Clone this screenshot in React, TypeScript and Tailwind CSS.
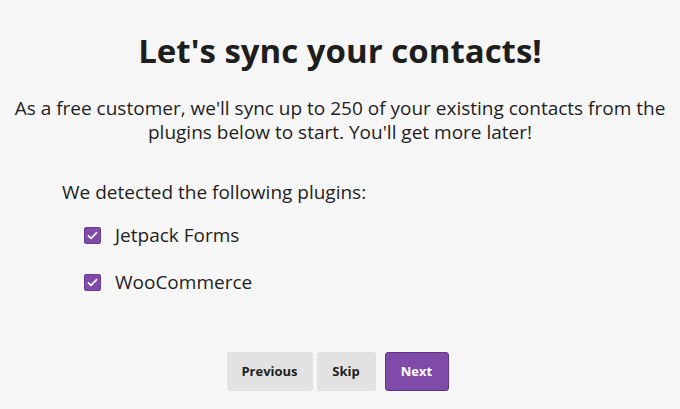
export default function App() {
  const plugins = ["Jetpack Forms", "WooCommerce"];

  return (
    <div
      className="min-h-[409px] w-full bg-[#f6f6f6] text-[#1e1e1e] pt-[29px]"
      style={{ fontFamily: "'Open Sans', 'Noto Sans', sans-serif" }}
    >
      <h1 className="text-center text-[33px] font-bold leading-[44px]">
        Let's sync your contacts!
      </h1>
      <p className="mt-[23px] px-3 text-center text-[19px] leading-[24px]">
        As a free customer, we'll sync up to 250 of your existing contacts from the plugins below to start. You'll get more later!
      </p>

      <div className="mt-[36px] pl-[62px]">
        <div className="text-[19px] leading-[24px]">We detected the following plugins:</div>
        <div className="mt-[23px] flex flex-col gap-[30px] pl-[22px]">
          {plugins.map((name) => (
            <label key={name} className="flex items-center gap-[14px] text-[19px] leading-[17px]">
              <span className="flex h-[17px] w-[17px] items-center justify-center rounded-[2px] border border-[#6b3d96] bg-[#7f4aa8]">
                <svg viewBox="0 0 16 16" className="h-[13px] w-[13px]" fill="none">
                  <path d="M3 8.5l3.2 3L13 4.5" stroke="white" strokeWidth="2" strokeLinecap="round" strokeLinejoin="round" />
                </svg>
              </span>
              {name}
            </label>
          ))}
        </div>
      </div>

      <div className="mt-[61px] flex justify-center pr-[5px]">
        <button className="h-[39px] w-[86px] rounded-[3px] bg-[#e2e2e2] text-[13px] font-bold">
          Previous
        </button>
        <button className="ml-[4px] h-[39px] w-[59px] rounded-[3px] bg-[#e2e2e2] text-[13px] font-bold">
          Skip
        </button>
        <button className="ml-[9px] h-[39px] w-[64px] rounded-[3px] border border-[#5f3589] bg-[#7f4aa8] text-[13px] font-bold text-white">
          Next
        </button>
      </div>
    </div>
  );
}
